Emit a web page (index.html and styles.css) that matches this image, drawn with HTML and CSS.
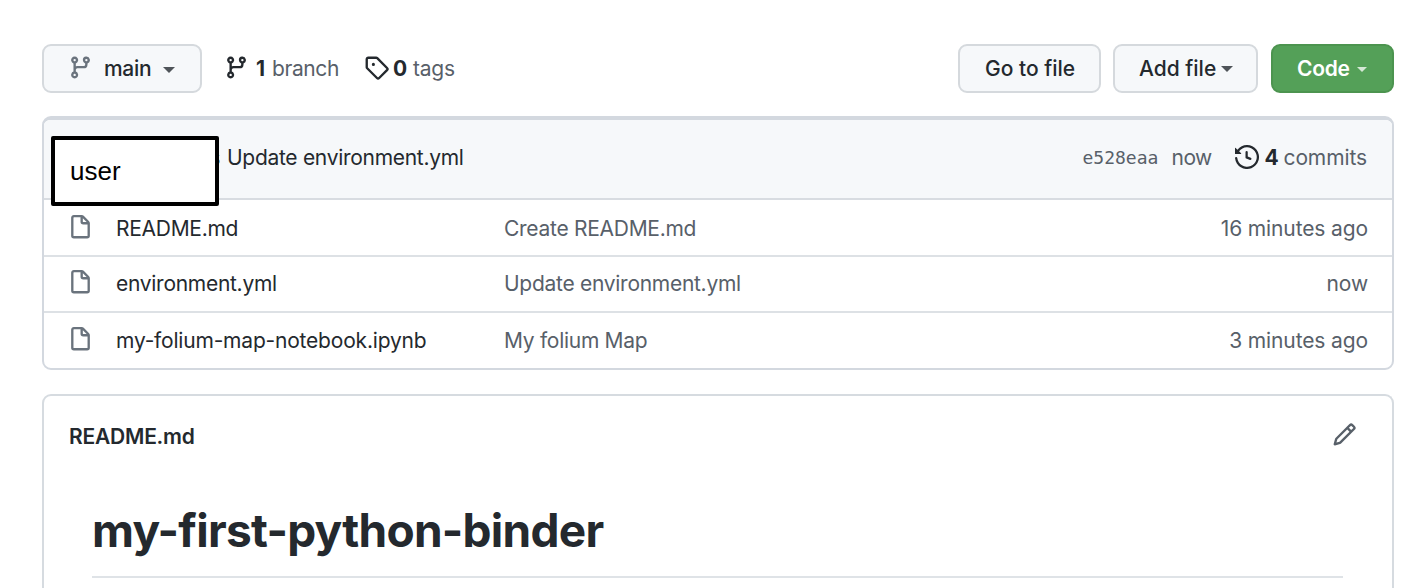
FILE: index.html
```html
<!DOCTYPE html>
<html lang="en">
<head>
<meta charset="utf-8">
<title>my-first-python-binder</title>
<link rel="stylesheet" href="styles.css">
</head>
<body>
<svg class="defs" aria-hidden="true">
  <symbol id="branch" viewBox="0 0 16 16"><path fill-rule="evenodd" d="M11.75 2.5a.75.75 0 100 1.5.75.75 0 000-1.5zm-2.25.75a2.25 2.25 0 113 2.122V6A2.5 2.5 0 0110 8.5H6a1 1 0 00-1 1v1.128a2.251 2.251 0 11-1.5 0V5.372a2.25 2.25 0 111.5 0v1.836A2.492 2.492 0 016 7h4a1 1 0 001-1v-.628A2.25 2.25 0 019.5 3.25zM4.25 12a.75.75 0 100 1.5.75.75 0 000-1.5zM3.5 3.25a.75.75 0 111.5 0 .75.75 0 01-1.5 0z"/></symbol>
  <symbol id="tag" viewBox="0 0 16 16"><path fill-rule="evenodd" d="M2.5 7.775V2.75a.25.25 0 01.25-.25h5.025a.25.25 0 01.177.073l6.25 6.25a.25.25 0 010 .354l-5.025 5.025a.25.25 0 01-.354 0l-6.25-6.25a.25.25 0 01-.073-.177zm-1.5 0V2.75C1 1.784 1.784 1 2.75 1h5.025c.464 0 .91.184 1.238.513l6.25 6.25a1.75 1.75 0 010 2.474l-5.026 5.026a1.75 1.75 0 01-2.474 0l-6.25-6.25A1.75 1.75 0 011 7.775zM6 5a1 1 0 100 2 1 1 0 000-2z"/></symbol>
  <symbol id="history" viewBox="0 0 16 16"><path fill-rule="evenodd" d="M1.643 3.143L.427 1.927A.25.25 0 000 2.104V5.75c0 .138.112.25.25.25h3.646a.25.25 0 00.177-.427L2.715 4.215a6.5 6.5 0 11-1.18 4.458.75.75 0 10-1.493.154 8.001 8.001 0 101.6-5.684zM7.75 4a.75.75 0 01.75.75v2.992l2.028.812a.75.75 0 01-.557 1.392l-2.5-1A.75.75 0 017 8.25v-3.5A.75.75 0 017.75 4z"/></symbol>
  <symbol id="file" viewBox="0 0 16 16"><path fill-rule="evenodd" d="M3.75 1.5a.25.25 0 00-.25.25v11.5c0 .138.112.25.25.25h8.5a.25.25 0 00.25-.25V6H9.75A1.75 1.75 0 018 4.25V1.5H3.75zm5.75.56v2.19c0 .138.112.25.25.25h2.19L9.5 2.06zM2 1.75C2 .784 2.784 0 3.75 0h5.086c.464 0 .909.184 1.237.513l3.414 3.414c.329.328.513.773.513 1.237v8.086A1.75 1.75 0 0112.25 15h-8.5A1.75 1.75 0 012 13.25V1.75z"/></symbol>
  <symbol id="pencil" viewBox="0 0 16 16"><path fill-rule="evenodd" d="M11.013 1.427a1.75 1.75 0 012.474 0l1.086 1.086a1.75 1.75 0 010 2.474l-8.61 8.61c-.21.21-.47.364-.756.445l-3.251.93a.75.75 0 01-.927-.928l.929-3.25a1.75 1.75 0 01.445-.758l8.61-8.61zm1.414 1.06a.25.25 0 00-.354 0L10.811 3.75l1.439 1.44 1.263-1.263a.25.25 0 000-.354l-1.086-1.086zM11.189 6.25L9.75 4.81l-6.286 6.287a.25.25 0 00-.064.108l-.558 1.953 1.953-.558a.249.249 0 00.108-.064l6.286-6.286z"/></symbol>
</svg>
<main class="page">
  <div class="toolbar">
    <button class="btn btn-branch"><svg class="icon muted"><use href="#branch"/></svg><span class="label">main</span><i class="caret"></i></button>
    <a class="stat branches"><svg class="icon"><use href="#branch"/></svg><b>1</b><span>branch</span></a>
    <a class="stat tags"><svg class="icon"><use href="#tag"/></svg><b>0</b><span>tags</span></a>
    <div class="actions">
      <button class="btn btn-goto"><span class="label">Go to file</span></button>
      <button class="btn btn-add"><span class="label">Add file</span><i class="caret"></i></button>
      <button class="btn btn-code"><span class="label">Code</span><i class="caret small"></i></button>
    </div>
  </div>

  <section class="files">
    <div class="commit">
      <div class="user-box">user</div>
      <b class="author">s</b>
      <span class="message">Update environment.yml</span>
      <code class="hash">e528eaa</code>
      <span class="when">now</span>
      <svg class="icon history"><use href="#history"/></svg>
      <b class="count">4</b>
      <span class="commits">commits</span>
    </div>
    <div class="row first"><svg class="icon"><use href="#file"/></svg><span class="name">README.md</span><span class="desc">Create README.md</span><span class="age">16 minutes ago</span></div>
    <div class="row"><svg class="icon"><use href="#file"/></svg><span class="name">environment.yml</span><span class="desc">Update environment.yml</span><span class="age">now</span></div>
    <div class="row last"><svg class="icon"><use href="#file"/></svg><span class="name">my-folium-map-notebook.ipynb</span><span class="desc">My folium Map</span><span class="age">3 minutes ago</span></div>
  </section>

  <section class="readme">
    <header class="readme-head"><h2>README.md</h2><svg class="icon"><use href="#pencil"/></svg></header>
    <h1>my-first-python-binder</h1>
  </section>
</main>
</body>
</html>
```

FILE: styles.css
```css
* { box-sizing: border-box; }
body {
  margin: 0;
  height: 588px;
  overflow: hidden;
  background: #fff;
  color: #24292e;
  font: 21px/32px Inter, "Liberation Sans", sans-serif;
  letter-spacing: -0.22px;
  white-space: nowrap;
}
.defs { position: absolute; width: 0; height: 0; }
.page { padding: 44px 22px 0 42px; }
.icon { width: 25px; height: 25px; flex: none; fill: currentColor; }
.muted { color: #6a737d; }
b { font-weight: 700; }

.toolbar { display: flex; align-items: center; height: 49px; }
.btn {
  display: flex;
  align-items: center;
  height: 49px;
  padding: 0;
  border: 2px solid #d5d9dd;
  border-radius: 9px;
  background: #f6f8fa;
  color: #24292e;
  font: 500 21px/32px Inter, "Liberation Sans", sans-serif;
  text-align: left;
}
.caret {
  border: 6px solid transparent;
  border-top-color: #4f5459;
  border-bottom: 0;
}
.btn-branch { width: 160px; padding-left: 24px; }
.btn-branch .icon { margin-top: -3px; }
.btn-branch .label { width: 59px; margin-left: 11px; letter-spacing: -0.3px; }
.btn-branch .caret { margin-top: 2px; }
.stat { display: flex; align-items: center; }
.stat .icon { margin-top: -2px; }
.stat span { color: #586069; }
.branches { width: 140px; margin-left: 22px; }
.branches b { width: 16px; margin-left: 7px; }
.branches span { letter-spacing: -0.4px; }
.tags b { width: 20px; margin-left: 4px; }
.actions { display: flex; gap: 12px; margin-left: auto; }
.btn-goto { width: 143px; padding-left: 25px; }
.btn-add { width: 145px; padding-left: 24px; }
.btn-add .label { width: 82px; }
.btn-code { width: 123px; margin-left: 1px; padding-left: 24px; background: #54a058; border-color: #4c944f; color: #fff; font-weight: 600; }
.btn-code .label { width: 60px; letter-spacing: -0.3px; }
.caret.small { margin-top: 2px; border-width: 5px 5px 0; border-top-color: #d5e8d6; }

.files {
  margin-top: 23px;
  border: 2px solid #d3d8df;
  border-top-width: 4px;
  border-radius: 9px;
  height: 254px;
}
.commit {
  position: relative;
  display: flex;
  align-items: center;
  height: 80px;
  padding: 0 25px 2px 165px;
  border-bottom: 2px solid #d8dce1;
  border-radius: 6px 6px 0 0;
  background: #f6f8fa;
}
.user-box {
  position: absolute;
  left: 7px;
  top: 16px;
  width: 168px;
  height: 70px;
  padding-left: 15px;
  border: 4px solid #000;
  border-radius: 2px;
  background: #fff;
  color: #000;
  font: 26px/62px "Liberation Sans", sans-serif;
  letter-spacing: 0;
}
.author { width: 18px; font-weight: 500; }
.message { letter-spacing: -0.29px; }
.hash { margin-left: auto; width: 89px; font: 18px/32px "DejaVu Sans Mono", monospace; letter-spacing: 0; color: #586069; }
.when { width: 64px; letter-spacing: -0.5px; color: #586069; }
.history { width: 24px; height: 24px; margin-top: -2px; }
.count { width: 19px; margin-left: 5px; }
.commits { letter-spacing: -0.1px; color: #586069; }

.row {
  display: grid;
  grid-template-columns: 48px 388px 1fr auto;
  align-items: center;
  height: 56px;
  padding: 0 24px;
  border-top: 2px solid #dde1e5;
  letter-spacing: -0.28px;
}
.row.first { border-top: 0; height: 55px; padding-top: 2px; }
.row.last { padding-top: 2px; }
.row.last .name { letter-spacing: -0.2px; }
.row .icon { color: #6a737d; margin-top: -3px; }
.desc, .age { color: #586069; }
.age { letter-spacing: -0.12px; }

.readme {
  margin-top: 24px;
  height: 194px;
  border: 2px solid #d6dbe0;
  border-bottom: 0;
  border-radius: 9px 9px 0 0;
}
.readme-head { display: flex; align-items: center; justify-content: space-between; height: 77px; padding: 4px 35px 0 25px; color: #586069; }
.readme-head .icon { margin-top: -4px; }
h2 { margin: 0; font-size: 21px; font-weight: 600; color: #24292e; }
h1 { margin: 27px 49px 0 48px; height: 78px; border-bottom: 2px solid #dfe3e7; font-size: 46px; line-height: 60px; font-weight: 700; letter-spacing: -0.74px; }
```
